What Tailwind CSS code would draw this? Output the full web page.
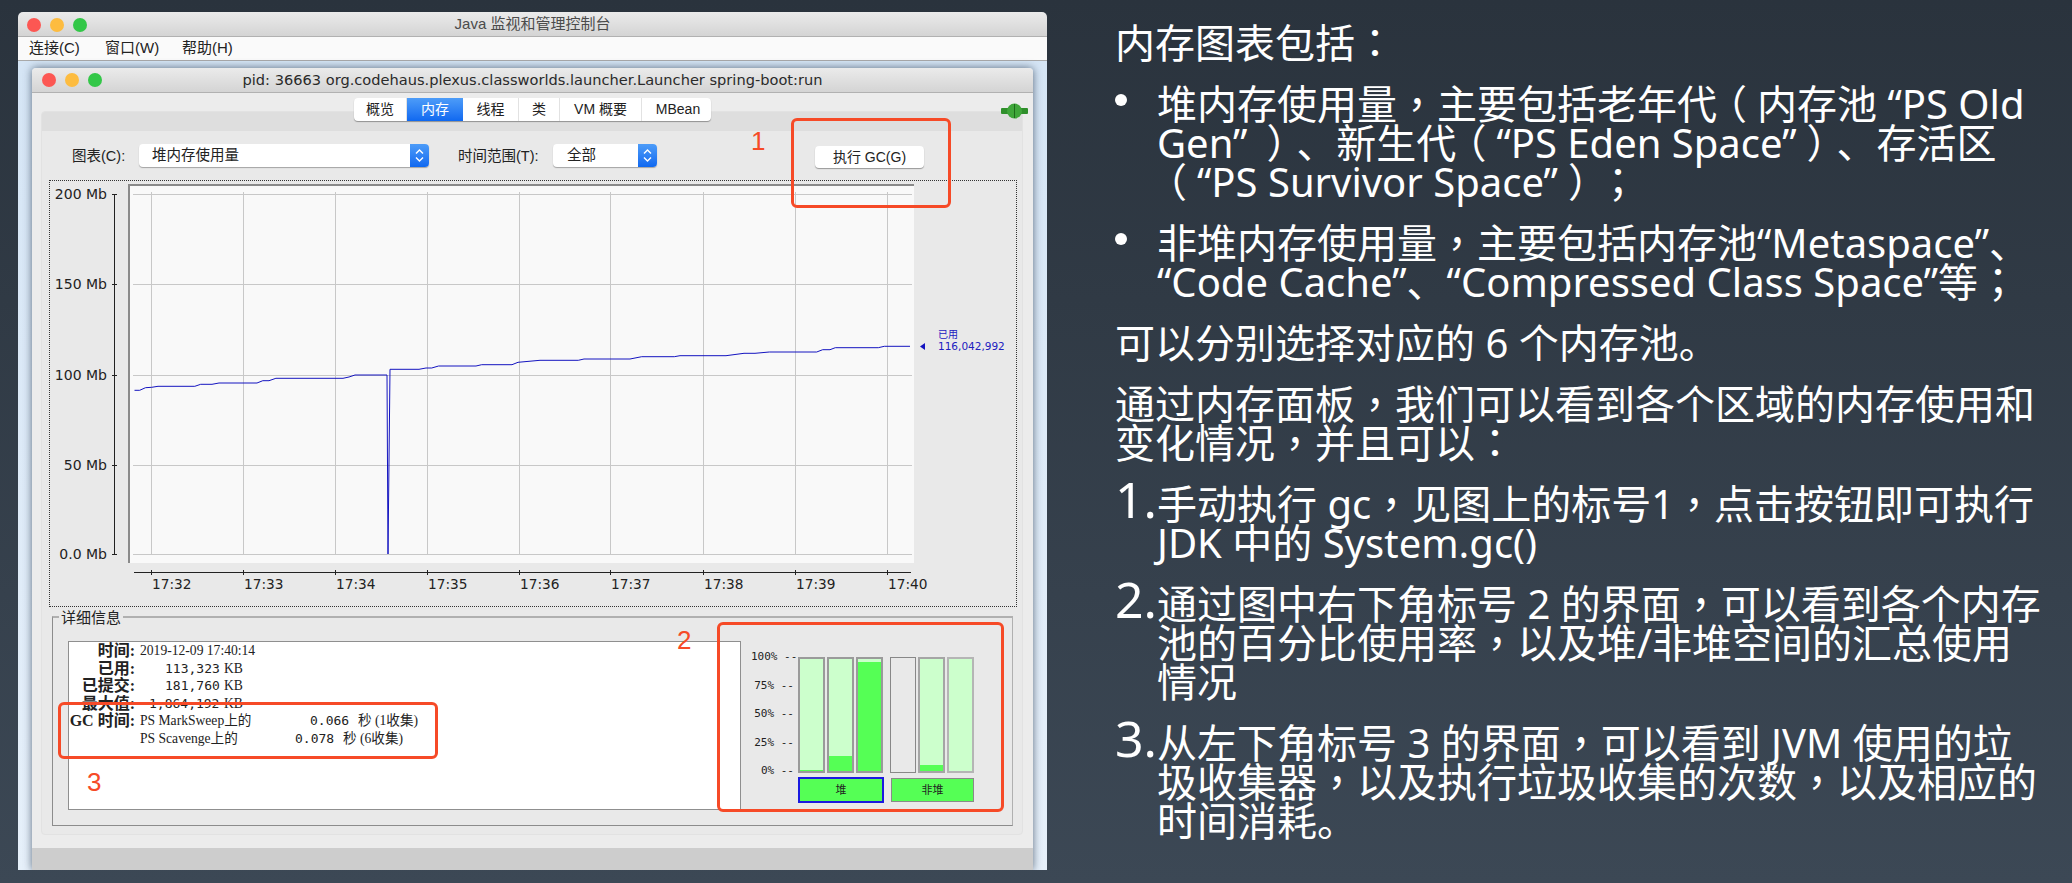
<!DOCTYPE html>
<html lang="zh">
<head>
  <meta charset="utf-8">
  <title>内存图表</title>
  <script src="https://cdn.jsdelivr.net/npm/@tailwindcss/browser@4"></script>
</head>
<body class="relative flex w-[2072px] h-[883px] overflow-hidden bg-gradient-to-b from-[#2a333d] to-[#3c4855] font-['Liberation_Sans','Noto_Sans_CJK_SC',sans-serif]">

  <!-- outer app window -->
  <div class="ml-[18px] mt-[12px] flex flex-col w-[1029px] h-[858px] shrink-0 rounded-t-[5px] overflow-hidden">
    <div class="relative flex items-center justify-center h-[25px] bg-gradient-to-b from-[#ebebeb] to-[#d4d4d4] border-b border-[#b1b1b1] text-[15px] text-[#4b4b4b]">
      <div class="absolute left-[9px] top-[6px] flex gap-[9px]">
        <span class="w-[14px] h-[14px] rounded-full bg-[#fc5753]"></span>
        <span class="w-[14px] h-[14px] rounded-full bg-[#fdbc40]"></span>
        <span class="w-[14px] h-[14px] rounded-full bg-[#33c748]"></span>
      </div>
      Java 监视和管理控制台
    </div>
    <div class="flex items-center h-[24px] bg-[#fafafa] border-b border-[#a9a9a9] text-[15px] text-[#222] pl-[11px]">
      <span class="w-[76px]">连接(C)</span>
      <span class="w-[77px]">窗口(W)</span>
      <span>帮助(H)</span>
    </div>

    <!-- desktop behind the inner window -->
    <div class="flex-1 bg-gradient-to-b from-[#d5e5f5] to-[#e6f0fa] pt-[7px] pl-[14px]">
      <div class="flex flex-col w-[1001px] h-[802px] rounded-t-[4px] overflow-hidden shadow-[0_0_9px_rgba(50,65,85,0.75)]">
        <div class="relative flex items-center justify-center h-[25px] bg-gradient-to-b from-[#ebebeb] to-[#d4d4d4] border-b border-[#b1b1b1] font-['DejaVu_Sans'] text-[14.6px] text-[#2a2a2a]">
          <div class="absolute left-[10px] top-[5px] flex gap-[9px]">
            <span class="w-[14px] h-[14px] rounded-full bg-[#fc5753]"></span>
            <span class="w-[14px] h-[14px] rounded-full bg-[#fdbc40]"></span>
            <span class="w-[14px] h-[14px] rounded-full bg-[#33c748]"></span>
          </div>
          pid: 36663 org.codehaus.plexus.classworlds.launcher.Launcher spring-boot:run
        </div>

        <div class="relative flex-1 bg-[#ececec] pl-[9px] pr-[10px] pt-[18px] pb-[13px]">
          <!-- tabs -->
          <div class="absolute left-[322px] top-[5px] z-10 flex h-[23px] w-[357px] rounded-[4px] bg-white shadow-[0_1px_1px_rgba(0,0,0,0.35)] text-[14px] text-[#222] leading-[23px] text-center">
            <span class="w-[53px] border-r border-[#e2e2e2]">概览</span>
            <span class="w-[56px] bg-gradient-to-b from-[#4d9cf8] to-[#0f68f0] text-white">内存</span>
            <span class="w-[56px] border-r border-[#e2e2e2]">线程</span>
            <span class="w-[41px] border-r border-[#e2e2e2]">类</span>
            <span class="w-[82px] border-r border-[#e2e2e2]">VM 概要</span>
            <span class="w-[69px] pl-[3px]">MBean</span>
          </div>
          <!-- connection plug -->
          <svg class="absolute left-[969px] top-[10px]" width="28" height="18" viewBox="0 0 28 18">
            <rect x="0" y="5" width="27" height="6" rx="1" fill="#2f8f2b"/>
            <circle cx="13.5" cy="8" r="7.5" fill="#3fa63a"/>
            <path d="M13.5 1v14" stroke="#1d6a1b" stroke-width="1"/>
          </svg>

          <!-- tab panel -->
          <div class="flex flex-col h-full rounded-[4px] bg-[#e9e9e9] border border-[#e2e2e2] overflow-hidden">
            <div class="h-[19px] shrink-0 bg-[#dedede]"></div>

            <!-- controls -->
            <div class="flex h-[23px] mt-[13px] text-[14.5px] text-[#222] shrink-0">
              <span class="ml-[30px] w-[67px] leading-[25px]">图表(C):</span>
              <div class="relative w-[290px] rounded-[4px] bg-white shadow-[0_1px_1px_rgba(0,0,0,0.3)] pl-[13px] leading-[22px]">
                堆内存使用量
                <span class="absolute right-0 top-0 flex items-center justify-center w-[19px] h-full rounded-r-[4px] bg-gradient-to-b from-[#4d9cf8] to-[#0f68f0]">
                  <svg width="9" height="15" viewBox="0 0 9 15" fill="none" stroke="#fff" stroke-width="1.4"><path d="M1 5.5 4.5 2 8 5.5M1 9.5 4.5 13 8 9.5"/></svg>
                </span>
              </div>
              <span class="ml-[29px] w-[95px] leading-[25px]">时间范围(T):</span>
              <div class="relative w-[104px] rounded-[4px] bg-white shadow-[0_1px_1px_rgba(0,0,0,0.3)] pl-[14px] leading-[22px]">
                全部
                <span class="absolute right-0 top-0 flex items-center justify-center w-[19px] h-full rounded-r-[4px] bg-gradient-to-b from-[#4d9cf8] to-[#0f68f0]">
                  <svg width="9" height="15" viewBox="0 0 9 15" fill="none" stroke="#fff" stroke-width="1.4"><path d="M1 5.5 4.5 2 8 5.5M1 9.5 4.5 13 8 9.5"/></svg>
                </span>
              </div>
              <div class="ml-[158px] mt-[2px] w-[109px] h-[22px] rounded-[4px] bg-white shadow-[0_1px_1px_rgba(0,0,0,0.35)] text-center text-[14px] leading-[22px]">执行 GC(G)</div>
            </div>

            <!-- chart -->
            <div class="ml-[7px] mt-[13px] w-[968px] h-[427px] shrink-0 border border-dotted border-[#333]">
              <svg class="block" width="966" height="425" viewBox="50 181 966 425">
                <rect x="129" y="184" width="785" height="379" fill="#f9f9f9"/>
                <path d="M129 184V563M129 185H914" stroke="#8a8a8a" stroke-width="2" fill="none"/>
                <path d="M133 194.5H912M133 284.5H912M133 375.5H912M133 465.5H912M133 554.5H912M151.5 192V554M243.5 192V554M335.5 192V554M427.5 192V554M519.5 192V554M610.5 192V554M703.5 192V554M795.5 192V554M887.5 192V554" stroke="#c8c8c8" stroke-width="1" fill="none"/>
                <polyline fill="none" stroke="#1414c0" stroke-width="1" points="134.5,390.3 139.7,390.3 145.5,387.7 151.7,387.3 158,386.3 194.8,386.3 200.7,384.3 212,384.3 219,383 257,383 262.8,380.7 269,380.7 275.9,378.3 343,378.3 349,377 355,375 387,375 388,554 390,369.3 419,369.3 426,368 431.7,368 438.6,366 476,366 481.7,364.7 512,364.7 518,362.3 540,360.3 578.3,360.3 584,359 630,359 641.7,356.7 674.3,356.7 680,355.7 726,355.7 744,353.3 755,353.3 769.3,352 816.7,352 822.7,349.7 830,349.7 835.3,347.7 878.3,347.7 884.3,346.3 910,346.3"/>
                <path d="M920 346.5 925 343V350Z" fill="#1414c0"/>
                <text x="938" y="338" class="font-['Noto_Sans_CJK_SC'] text-[10px] fill-[#2020c0]">已用</text>
                <text x="938" y="350" class="font-['DejaVu_Sans'] text-[10.5px] fill-[#2020c0]">116,042,992</text>

                <path d="M114.5 194V554M112 194.5H117M112 284.5H117M112 375.5H117M112 465.5H117M112 554.5H117" stroke="#222" stroke-width="1" fill="none"/>
                <g text-anchor="end" class="font-['DejaVu_Sans'] text-[14px] fill-[#222]">
                  <text x="107" y="199">200 Mb</text>
                  <text x="107" y="289">150 Mb</text>
                  <text x="107" y="380">100 Mb</text>
                  <text x="107" y="470">50 Mb</text>
                  <text x="107" y="559">0.0 Mb</text>
                </g>

                <path d="M134 572.5H911M151.5 570V575M243.5 570V575M335.5 570V575M427.5 570V575M519.5 570V575M610.5 570V575M703.5 570V575M795.5 570V575M887.5 570V575" stroke="#222" stroke-width="1" fill="none"/>
                <g class="font-['DejaVu_Sans'] text-[13.7px] fill-[#222]">
                  <text x="152" y="589">17:32</text>
                  <text x="244" y="589">17:33</text>
                  <text x="336" y="589">17:34</text>
                  <text x="428" y="589">17:35</text>
                  <text x="520" y="589">17:36</text>
                  <text x="611" y="589">17:37</text>
                  <text x="704" y="589">17:38</text>
                  <text x="796" y="589">17:39</text>
                  <text x="888" y="589">17:40</text>
                </g>
              </svg>
            </div>

            <!-- details -->
            <div class="relative ml-[10px] mt-[9px] flex w-[961px] h-[210px] shrink-0 border border-[#8c8c8c] border-t-2 border-t-[#b0b0b0] border-r-[#b0b0b0]">
              <span class="absolute left-[6px] -top-[9px] bg-[#e9e9e9] px-[2px] text-[15px] leading-[18px] text-[#222]">详细信息</span>

              <div class="ml-[15px] mt-[23px] w-[673px] h-[169px] shrink-0 bg-white border border-[#8f8f8f] font-['Liberation_Serif','Noto_Sans_CJK_SC',serif] text-[13.6px] text-[#222] leading-[17.5px]">
                <div class="flex"><b class="w-[66px] text-right text-[16px]">时间:</b><span class="ml-[5px]">2019-12-09 17:40:14</span></div>
                <div class="flex"><b class="w-[66px] text-right text-[16px]">已用:</b><span class="ml-[30px] w-[59px] font-['DejaVu_Sans_Mono'] text-[13px]">113,323</span>KB</div>
                <div class="flex"><b class="w-[66px] text-right text-[16px]">已提交:</b><span class="ml-[30px] w-[59px] font-['DejaVu_Sans_Mono'] text-[13px]">181,760</span>KB</div>
                <div class="flex"><b class="w-[66px] text-right text-[16px]">最大值:</b><span class="ml-[14px] w-[75px] font-['DejaVu_Sans_Mono'] text-[13px]">1,864,192</span>KB</div>
                <div class="flex"><b class="w-[66px] text-right text-[16px] whitespace-nowrap">GC 时间:</b><span class="ml-[5px] w-[170px]">PS MarkSweep上的</span><span class="w-[48px] font-['DejaVu_Sans_Mono'] text-[13px]">0.066</span><span class="w-[17px]">秒</span>(1收集)</div>
                <div class="flex"><span class="w-[71px]"></span><span class="w-[155px]">PS Scavenge上的</span><span class="w-[48px] font-['DejaVu_Sans_Mono'] text-[13px]">0.078</span><span class="w-[17px]">秒</span>(6收集)</div>
              </div>

              <!-- memory pool bars -->
              <div class="flex flex-col justify-between ml-[10px] mt-[32px] h-[128px] w-[43px] font-['DejaVu_Sans_Mono'] text-[11px] leading-[14px] text-[#222] whitespace-pre text-right">
                <span>100% --</span><span>75% --</span><span>50% --</span><span>25% --</span><span>0% --</span>
              </div>
              <div class="ml-[4px] mt-[39px] flex flex-col w-[176px]">
                <div class="flex h-[116px]">
                  <div class="flex w-[86px] gap-[2px]">
                    <div class="flex flex-col justify-end w-[27px] border-2 border-[#9a9a9a] bg-[#ccffcc]"><div class="bg-[#55ff55]" style="height:1%"></div></div>
                    <div class="flex flex-col justify-end w-[27px] border-2 border-[#9a9a9a] bg-[#ccffcc]"><div class="bg-[#55ff55]" style="height:13%"></div></div>
                    <div class="flex flex-col justify-end w-[27px] border-2 border-[#9a9a9a] bg-[#ccffcc]"><div class="bg-[#55ff55]" style="height:97%"></div></div>
                  </div>
                  <div class="flex ml-[6px] w-[84px] gap-[2px]">
                    <div class="w-[26px] border border-[#888] bg-[#e9e9e9]"></div>
                    <div class="flex flex-col justify-end w-[27px] border-2 border-[#a5a5a5] bg-[#ccffcc]"><div class="bg-[#55ff55]" style="height:5%"></div></div>
                    <div class="w-[27px] border-2 border-[#b5b5b5] bg-[#ccffcc]"></div>
                  </div>
                </div>
                <div class="flex mt-[4px] text-[11px] text-center text-[#222]">
                  <div class="w-[86px] h-[26px] border-2 border-[#1a1ae0] bg-[#55ff55] leading-[22px]">堆</div>
                  <div class="ml-[7px] mt-[1px] w-[83px] h-[24px] border border-[#8a8a8a] bg-[#55ff55] leading-[22px]">非堆</div>
                </div>
              </div>
            </div>
          </div>
        </div>

        <div class="h-[22px] shrink-0 bg-[#cdcdcd]"></div>
      </div>
    </div>
  </div>

  <!-- notes on the right -->
  <div class="ml-[68px] pt-[23px] flex flex-col gap-[22px] whitespace-nowrap font-['Noto_Sans','Noto_Sans_CJK_SC',sans-serif] text-[40px] leading-[39px] text-white [text-spacing-trim:space-all]">
    <p>内存图表包括<span lang="zh-TW" class="font-['Noto_Sans_CJK_TC'] leading-[0px]">：</span></p>
    <div class="flex">
      <span class="mt-[10px] mr-[30px] w-[12px] h-[12px] rounded-full bg-white shrink-0"></span>
      <p>堆内存使用量<span lang="zh-TW" class="font-['Noto_Sans_CJK_TC'] leading-[0px]">，</span>主要包括老年代<span lang="zh-TW" class="relative -left-[10px] font-['Noto_Sans_CJK_TC'] leading-[0px]">（</span>内存池 “PS Old<br>Gen”<span lang="zh-TW" class="relative left-[10px] ml-[9px] font-['Noto_Sans_CJK_TC'] leading-[0px]">）</span>、新生代<span lang="zh-TW" class="relative -left-[10px] font-['Noto_Sans_CJK_TC'] leading-[0px]">（</span>“PS Eden Space”<span lang="zh-TW" class="relative left-[10px] font-['Noto_Sans_CJK_TC'] leading-[0px]">）</span>、存活区<br><span lang="zh-TW" class="relative -left-[10px] font-['Noto_Sans_CJK_TC'] leading-[0px]">（</span>“PS Survivor Space”<span lang="zh-TW" class="relative left-[10px] font-['Noto_Sans_CJK_TC'] leading-[0px]">）</span><span lang="zh-TW" class="font-['Noto_Sans_CJK_TC'] leading-[0px]">；</span></p>
    </div>
    <div class="flex">
      <span class="mt-[10px] mr-[30px] w-[12px] h-[12px] rounded-full bg-white shrink-0"></span>
      <p>非堆内存使用量<span lang="zh-TW" class="font-['Noto_Sans_CJK_TC'] leading-[0px]">，</span>主要包括内存池“Metaspace”、<br>“Code Cache”、“Compressed Class Space”等<span lang="zh-TW" class="font-['Noto_Sans_CJK_TC'] leading-[0px]">；</span></p>
    </div>
    <p>可以分别选择对应的 6 个内存池。</p>
    <p>通过内存面板<span lang="zh-TW" class="font-['Noto_Sans_CJK_TC'] leading-[0px]">，</span>我们可以看到各个区域的内存使用和<br>变化情况<span lang="zh-TW" class="font-['Noto_Sans_CJK_TC'] leading-[0px]">，</span>并且可以<span lang="zh-TW" class="font-['Noto_Sans_CJK_TC'] leading-[0px]">：</span></p>
    <div class="flex">
      <span class="-mt-[4px] w-[42px] shrink-0 text-[50px]">1.</span>
      <p>手动执行 gc<span lang="zh-TW" class="font-['Noto_Sans_CJK_TC'] leading-[0px]">，</span>见图上的标号1<span lang="zh-TW" class="font-['Noto_Sans_CJK_TC'] leading-[0px]">，</span>点击按钮即可执行<br>JDK 中的 System.gc()</p>
    </div>
    <div class="flex">
      <span class="-mt-[4px] w-[42px] shrink-0 text-[50px]">2.</span>
      <p>通过图中右下角标号 2 的界面<span lang="zh-TW" class="font-['Noto_Sans_CJK_TC'] leading-[0px]">，</span>可以看到各个内存<br>池的百分比使用率<span lang="zh-TW" class="font-['Noto_Sans_CJK_TC'] leading-[0px]">，</span>以及堆/非堆空间的汇总使用<br>情况</p>
    </div>
    <div class="flex">
      <span class="-mt-[4px] w-[42px] shrink-0 text-[50px]">3.</span>
      <p>从左下角标号 3 的界面<span lang="zh-TW" class="font-['Noto_Sans_CJK_TC'] leading-[0px]">，</span>可以看到 JVM 使用的垃<br>圾收集器<span lang="zh-TW" class="font-['Noto_Sans_CJK_TC'] leading-[0px]">，</span>以及执行垃圾收集的次数<span lang="zh-TW" class="font-['Noto_Sans_CJK_TC'] leading-[0px]">，</span>以及相应的<br>时间消耗。</p>
    </div>
  </div>

  <!-- red annotations drawn over the screenshot -->
  <div class="absolute left-[791px] top-[118px] w-[160px] h-[90px] rounded-[6px] border-[3px] border-[#f64a27]"></div>
  <span class="absolute left-[751px] top-[126px] text-[26px] leading-[30px] text-[#f64a27]">1</span>
  <div class="absolute left-[717px] top-[622px] w-[287px] h-[190px] rounded-[6px] border-[3px] border-[#f64a27]"></div>
  <span class="absolute left-[677px] top-[625px] text-[26px] leading-[30px] text-[#f64a27]">2</span>
  <div class="absolute left-[58px] top-[702px] w-[380px] h-[57px] rounded-[6px] border-[3px] border-[#f64a27]"></div>
  <span class="absolute left-[87px] top-[767px] text-[26px] leading-[30px] text-[#f64a27]">3</span>
</body>
</html>
